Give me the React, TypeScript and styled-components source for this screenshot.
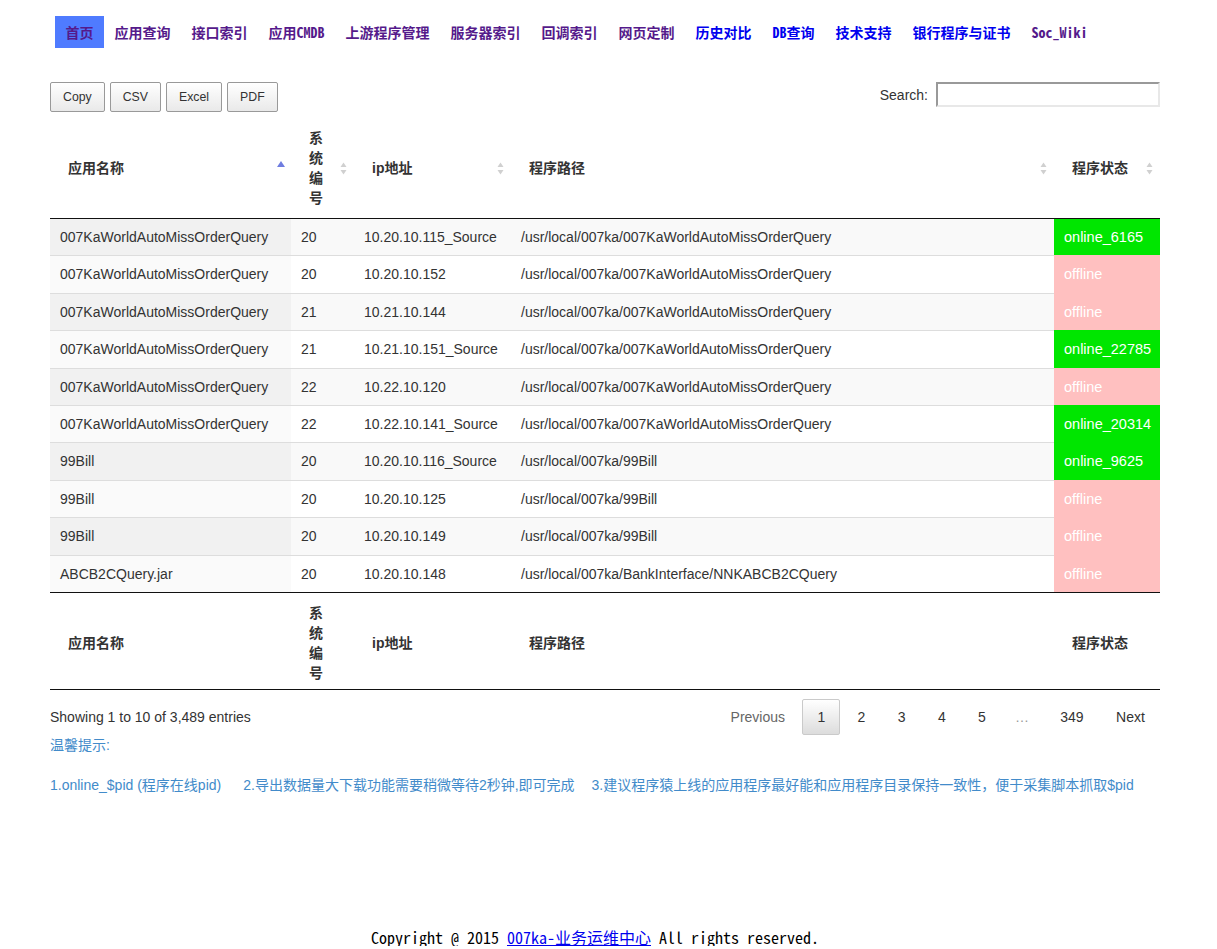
import React from "react";
import styled, { createGlobalStyle } from "styled-components";

const GlobalStyle = createGlobalStyle`
  html, body { margin: 0; padding: 0; background: #fff; }
  body {
    font-family: "Liberation Sans", "Noto Sans CJK SC", Arial, sans-serif;
    font-size: 14px;
    color: #333;
  }
  * { box-sizing: border-box; }
`;

const Nav = styled.nav`
  display: flex;
  margin: 16px 0 0 55px;
  height: 32px;
  font-family: "Noto Sans Mono CJK SC", "Liberation Mono", "Noto Sans CJK SC", monospace;
  font-weight: bold;
  font-size: 14px;
  line-height: 32px;
`;

const NavLink = styled.a<{ $active?: boolean; $fresh?: boolean }>`
  display: block;
  padding: 0 10.5px;
  white-space: nowrap;
  text-decoration: none;
  color: ${(p) => (p.$fresh ? "#0000ee" : "#551a8b")};
  background: ${(p) => (p.$active ? "#4f7bff" : "transparent")};
  cursor: pointer;
`;

const Container = styled.div`
  width: 1110px;
  margin-left: 50px;
`;

const Toolbar = styled.div`
  display: flex;
  justify-content: space-between;
  align-items: flex-start;
  margin-top: 34px;
  height: 30px;
`;

const ButtonGroup = styled.div`
  display: flex;
  gap: 5px;
`;

const ExportButton = styled.button`
  height: 30px;
  padding: 0 12px;
  font-family: "Liberation Sans", Arial, sans-serif;
  font-size: 12.3px;
  color: #333;
  border: 1px solid #999;
  border-radius: 2px;
  background: linear-gradient(to bottom, #ffffff 0%, #e9e9e9 100%);
  cursor: pointer;
`;

const SearchLabel = styled.label`
  display: flex;
  align-items: center;
  gap: 8px;
  height: 25px;
  color: #333;
`;

const SearchInput = styled.input`
  width: 224px;
  height: 25px;
  border-top: 2px solid #999;
  border-left: 2px solid #999;
  border-right: 2px solid #e8e8e8;
  border-bottom: 2px solid #e8e8e8;
  background: #fff;
  outline: none;
`;

const Table = styled.table`
  margin-top: 6px;
  width: 1110px;
  table-layout: fixed;
  border-collapse: separate;
  border-spacing: 0;
`;

const HeadCell = styled.th<{ $foot?: boolean }>`
  position: relative;
  padding: ${(p) => (p.$foot ? "10px 20px 6px 18px" : "10px 20px 10px 18px")};
  text-align: left;
  vertical-align: middle;
  font-weight: bold;
  font-size: 14px;
  line-height: 20px;
  color: #333;
  border-bottom: 1px solid #111;
  border-top: ${(p) => (p.$foot ? "1px solid #111" : "none")};
`;

const SortMark = styled.svg<{ $asc?: boolean }>`
  position: absolute;
  top: 50%;
  right: ${(p) => (p.$asc ? 6.5 : 7.5)}px;
  margin-top: ${(p) => (p.$asc ? -7 : -6.5)}px;
`;

const Cell = styled.td<{ $bg: string; $first?: boolean }>`
  padding: 8px 10px;
  line-height: 20.4px;
  font-size: 14px;
  color: #333;
  background: ${(p) => p.$bg};
  border-top: ${(p) => (p.$first ? "none" : "1px solid #ddd")};
  white-space: nowrap;
  overflow: hidden;
`;

const StatusCell = styled.td<{ $online: boolean; $first?: boolean }>`
  padding: 8px 10px;
  line-height: 20.4px;
  font-size: 14.5px;
  color: #fff;
  white-space: nowrap;
  background: ${(p) => (p.$online ? "#00e600" : "#ffc0c0")};
  border-top: ${(p) =>
    p.$first ? "none" : `1px solid ${p.$online ? "#00e600" : "#ffc0c0"}`};
`;

const InfoBar = styled.div`
  display: flex;
  justify-content: space-between;
  align-items: center;
  margin-top: 9px;
  height: 36px;
`;

const Info = styled.div`
  color: #333;
  line-height: 20px;
`;

const Pager = styled.div`
  display: flex;
  align-items: center;
`;

const PageButton = styled.a<{ $current?: boolean; $disabled?: boolean }>`
  display: block;
  margin-left: 2px;
  padding: 7px 14.2px;
  line-height: 20px;
  border: 1px solid ${(p) => (p.$current ? "#cacaca" : "transparent")};
  border-radius: 2px;
  color: ${(p) => (p.$disabled ? "#666" : "#333")};
  background: ${(p) =>
    p.$current ? "linear-gradient(to bottom, #ffffff 0%, #dcdcdc 100%)" : "transparent"};
  cursor: pointer;
`;

const Ellipsis = styled.span`
  padding: 0 14px;
  color: #999;
  line-height: 20px;
`;

const Hint = styled.p`
  margin: 0;
  color: #428bca;
  line-height: 20px;
`;

const TipsLine = styled.div`
  display: flex;
  margin-top: 20px;
  color: #428bca;
  line-height: 20px;
  white-space: nowrap;
`;

const Tip = styled.span<{ $space: number }>`
  margin-right: ${(p) => p.$space}px;
`;

const Footer = styled.footer`
  width: 1190px;
  margin-top: 133px;
  text-align: center;
  font-family: "Noto Sans Mono CJK SC", "Liberation Mono", "Noto Sans CJK SC", monospace;
  font-size: 16px;
  line-height: 18px;
  color: #000;
  white-space: nowrap;
`;

const FooterLink = styled.a`
  color: #0000ee;
  text-decoration: underline;
`;

const UnsortedIcon = () => (
  <SortMark width="7" height="13" viewBox="0 0 7 13">
    <polygon points="0.5,5 3.5,0.5 6.5,5" fill="#d0d0d0" />
    <polygon points="0.5,8 6.5,8 3.5,12.5" fill="#d0d0d0" />
  </SortMark>
);

const AscIcon = () => (
  <SortMark $asc width="8" height="6" viewBox="0 0 8 6">
    <polygon points="0,6 4,0 8,6" fill="#6f7de0" />
  </SortMark>
);

const navItems: { label: React.ReactNode; fresh?: boolean; active?: boolean }[] = [
  { label: "首页", active: true },
  { label: "应用查询" },
  { label: "接口索引" },
  { label: "应用CMDB" },
  { label: "上游程序管理" },
  { label: "服务器索引" },
  { label: "回调索引" },
  { label: "网页定制" },
  { label: "历史对比", fresh: true },
  { label: "DB查询", fresh: true },
  { label: "技术支持", fresh: true },
  { label: "银行程序与证书", fresh: true },
  { label: "Soc_Wiki" },
];

const longName = "007KaWorldAutoMissOrderQuery";
const longPath = "/usr/local/007ka/007KaWorldAutoMissOrderQuery";

const rows = [
  [longName, "20", "10.20.10.115_Source", longPath, "online_6165"],
  [longName, "20", "10.20.10.152", longPath, "offline"],
  [longName, "21", "10.21.10.144", longPath, "offline"],
  [longName, "21", "10.21.10.151_Source", longPath, "online_22785"],
  [longName, "22", "10.22.10.120", longPath, "offline"],
  [longName, "22", "10.22.10.141_Source", longPath, "online_20314"],
  ["99Bill", "20", "10.20.10.116_Source", "/usr/local/007ka/99Bill", "online_9625"],
  ["99Bill", "20", "10.20.10.125", "/usr/local/007ka/99Bill", "offline"],
  ["99Bill", "20", "10.20.10.149", "/usr/local/007ka/99Bill", "offline"],
  ["ABCB2CQuery.jar", "20", "10.20.10.148", "/usr/local/007ka/BankInterface/NNKABCB2CQuery", "offline"],
];

const columns = ["应用名称", "系统编号", "ip地址", "程序路径", "程序状态"];
const widths = [241, 63, 157, 543, 106];

export default function App() {
  return (
    <>
      <GlobalStyle />
      <Nav>
        {navItems.map((item, i) => (
          <NavLink key={i} $active={item.active} $fresh={item.fresh}>
            {item.label}
          </NavLink>
        ))}
      </Nav>
      <Container>
        <Toolbar>
          <ButtonGroup>
            <ExportButton>Copy</ExportButton>
            <ExportButton>CSV</ExportButton>
            <ExportButton>Excel</ExportButton>
            <ExportButton>PDF</ExportButton>
          </ButtonGroup>
          <SearchLabel>
            Search:
            <SearchInput type="search" />
          </SearchLabel>
        </Toolbar>
        <Table>
          <colgroup>
            {widths.map((w, i) => (
              <col key={i} style={{ width: w }} />
            ))}
          </colgroup>
          <thead>
            <tr>
              {columns.map((c, i) => (
                <HeadCell key={c}>
                  {c}
                  {i === 0 ? <AscIcon /> : <UnsortedIcon />}
                </HeadCell>
              ))}
            </tr>
          </thead>
          <tbody>
            {rows.map((r, ri) => {
              const odd = ri % 2 === 0;
              const stripe = odd ? "#f9f9f9" : "#ffffff";
              const sorted = odd ? "#f1f1f1" : "#fafafa";
              const online = r[4].startsWith("online");
              return (
                <tr key={ri}>
                  <Cell $bg={sorted} $first={ri === 0}>{r[0]}</Cell>
                  <Cell $bg={stripe} $first={ri === 0}>{r[1]}</Cell>
                  <Cell $bg={stripe} $first={ri === 0}>{r[2]}</Cell>
                  <Cell $bg={stripe} $first={ri === 0}>{r[3]}</Cell>
                  <StatusCell $online={online} $first={ri === 0}>{r[4]}</StatusCell>
                </tr>
              );
            })}
          </tbody>
          <tfoot>
            <tr>
              {columns.map((c) => (
                <HeadCell key={c} $foot>
                  {c}
                </HeadCell>
              ))}
            </tr>
          </tfoot>
        </Table>
        <InfoBar>
          <Info>Showing 1 to 10 of 3,489 entries</Info>
          <Pager>
            <PageButton $disabled>Previous</PageButton>
            <PageButton $current>1</PageButton>
            <PageButton>2</PageButton>
            <PageButton>3</PageButton>
            <PageButton>4</PageButton>
            <PageButton>5</PageButton>
            <Ellipsis>…</Ellipsis>
            <PageButton>349</PageButton>
            <PageButton>Next</PageButton>
          </Pager>
        </InfoBar>
        <Hint>温馨提示:</Hint>
        <TipsLine>
          <Tip $space={22}>1.online_$pid (程序在线pid)</Tip>
          <Tip $space={17}>2.导出数据量大下载功能需要稍微等待2秒钟,即可完成</Tip>
          <Tip $space={0}>3.建议程序猿上线的应用程序最好能和应用程序目录保持一致性，便于采集脚本抓取$pid</Tip>
        </TipsLine>
      </Container>
      <Footer>
        Copyright @ 2015 <FooterLink>007ka-业务运维中心</FooterLink> All rights reserved.
      </Footer>
    </>
  );
}
